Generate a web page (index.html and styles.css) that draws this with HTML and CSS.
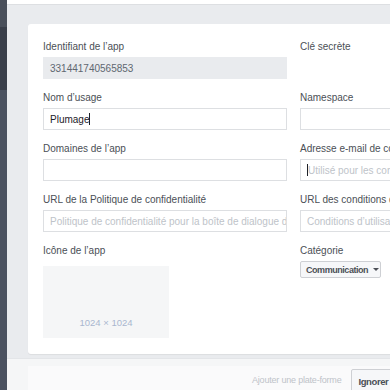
FILE: index.html
```html
<!DOCTYPE html>
<html lang="fr">
<head>
<meta charset="utf-8">
<link rel="stylesheet" href="styles.css">
</head>
<body>
<div class="app">
  <aside class="rail"><div class="rail-top"></div><div class="rail-dark"></div></aside>
  <div class="main">
    <div class="topbar"></div>
    <div class="content">
      <div class="card">
        <div class="grid">
          <div class="field">
            <label class="label">Identifiant de l’app</label>
            <div class="input readonly">331441740565853</div>
          </div>
          <div class="field">
            <label class="label">Clé secrète</label>
          </div>
          <div class="field">
            <label class="label">Nom d’usage</label>
            <div class="input"><span class="value">Plumage</span><span class="caret"></span></div>
          </div>
          <div class="field">
            <label class="label">Namespace</label>
            <div class="input"></div>
          </div>
          <div class="field">
            <label class="label">Domaines de l’app</label>
            <div class="input"></div>
          </div>
          <div class="field">
            <label class="label">Adresse e-mail de contact</label>
            <div class="input"><span class="caret"></span><span class="ph">Utilisé pour les communications importantes</span></div>
          </div>
          <div class="field">
            <label class="label">URL de la Politique de confidentialité</label>
            <div class="input"><span class="ph">Politique de confidentialité pour la boîte de dialogue de connexion</span></div>
          </div>
          <div class="field">
            <label class="label">URL des conditions de service</label>
            <div class="input"><span class="ph">Conditions d’utilisation pour la boîte de dialogue</span></div>
          </div>
          <div class="field">
            <label class="label">Icône de l’app</label>
            <div class="icon-box"><span class="icon-size">1024 × 1024</span></div>
          </div>
          <div class="field">
            <label class="label">Catégorie</label>
            <div><button class="select">Communication <span class="tri"></span></button></div>
          </div>
        </div>
      </div>
    </div>
    <div class="footer">
      <div class="footer-inner">
        <span class="add">Ajouter une plate-forme</span>
        <button class="btn">Ignorer</button>
      </div>
    </div>
  </div>
</div>
</body>
</html>
```
FILE: styles.css
```css
* { box-sizing: border-box; }
html, body { margin: 0; padding: 0; }
body {
  width: 390px;
  height: 390px;
  overflow: hidden;
  font-family: "Liberation Sans", Arial, sans-serif;
  font-size: 10px;
  color: #4b4f56;
  background: #e9ebee;
}
.app { display: flex; height: 390px; }
.rail {
  width: 7px;
  flex: none;
  background: #4b5260;
  display: flex;
  flex-direction: column;
}
.rail-top { height: 27px; background: #4a505b; }
.rail-dark { height: 63px; background: #3a3f4a; }
.main {
  flex: 1;
  min-width: 0;
  display: flex;
  flex-direction: column;
  overflow: hidden;
  background: #e9ebee;
}
.topbar {
  height: 5px;
  flex: none;
  background: #fff;
  border-bottom: 1px solid #dddfe2;
}
.content { padding: 19px 0 0 21px; flex: none; }
.card {
  width: 640px;
  height: 330px;
  background: #fff;
  border-radius: 3px 0 0 3px;
  box-shadow: 0 1px 1px rgba(0,0,0,0.06);
  padding: 16px 0 0 15px;
}
.grid {
  display: grid;
  grid-template-columns: 244px 300px;
  column-gap: 13px;
  row-gap: 12px;
}
.field { display: flex; flex-direction: column; }
.label {
  display: block;
  line-height: 14px;
  height: 14px;
  margin-bottom: 3px;
  color: #4b4f56;
  white-space: nowrap;
}
.input {
  height: 22px;
  border: 1px solid #dddfe2;
  background: #fff;
  padding: 0 6px;
  display: flex;
  align-items: center;
  overflow: hidden;
  white-space: nowrap;
  color: #1d2129;
}
.input.readonly {
  background: #e9ebee;
  border-color: #e9ebee;
  color: #606770;
}
.value { color: #1d2129; }
.caret {
  display: inline-block;
  width: 1px;
  height: 12px;
  background: #1d2129;
  flex: none;
}
.ph { color: #bec3c9; }
.icon-box {
  margin-top: 5px;
  width: 126px;
  height: 72px;
  background: #f5f6f7;
  display: flex;
  align-items: flex-end;
  justify-content: center;
  padding-bottom: 10px;
}
.icon-size { color: #a9b7cf; font-size: 9.5px; }
.select {
  font-family: "Liberation Sans", Arial, sans-serif;
  font-size: 9px;
  letter-spacing: -0.45px;
  font-weight: bold;
  color: #4b4f56;
  background: #f6f7f9;
  border: 1px solid #ced0d4;
  border-radius: 2px;
  height: 17px;
  width: 81px;
  padding: 0 0 0 5px;
  display: inline-flex;
  align-items: center;
  gap: 5px;
  cursor: pointer;
}
.tri {
  width: 0; height: 0;
  border-left: 3px solid transparent;
  border-right: 3px solid transparent;
  border-top: 3px solid #4b4f56;
}
.footer {
  margin-top: 4px;
  flex: 1;
  background: #f5f6f7;
  border-top: 1px solid #e3e5e8;
  padding: 7px 0 0 21px;
}
.footer-inner {
  height: 40px;
  width: 640px;
  background: #fafafb;
  padding: 3px 0 0 224px;
  display: flex;
  align-items: flex-start;
  gap: 10px;
}
.add { color: #bec3c9; font-size: 9px; letter-spacing: -0.2px; line-height: 22px; }
.btn {
  font-family: "Liberation Sans", Arial, sans-serif;
  font-size: 9.5px;
  letter-spacing: -0.4px;
  font-weight: bold;
  color: #4b4f56;
  background: #f6f7f9;
  border: 1px solid #ced0d4;
  border-radius: 2px;
  height: 24px;
  padding: 0 6px;
}
```
